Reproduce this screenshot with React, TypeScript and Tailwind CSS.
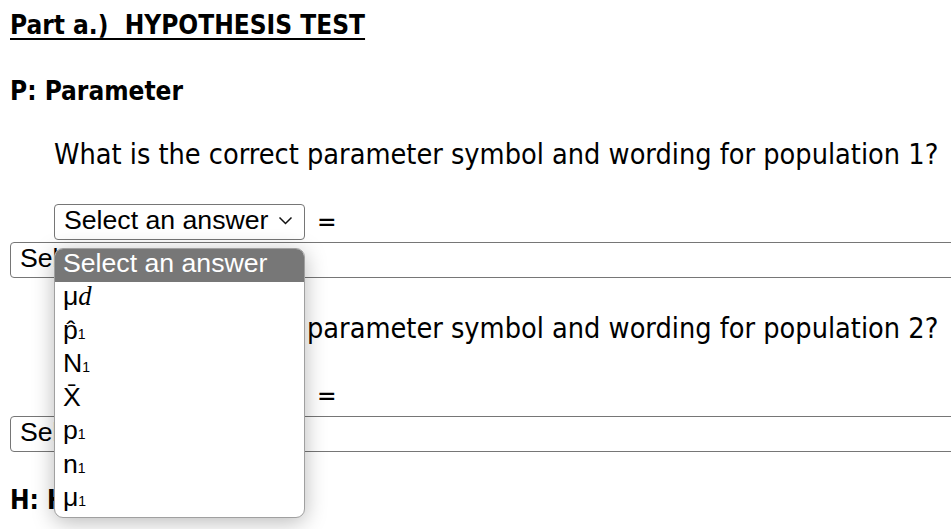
import React from "react"

const body = { fontFamily: '"DejaVu Sans Condensed", "DejaVu Sans", sans-serif' }
const arial = { fontFamily: '"Liberation Sans", Arial, sans-serif' }

function Chevron() {
  return (
    <svg width="15" height="9" viewBox="0 0 15 9" className="shrink-0">
      <polyline points="1.5,1.5 7.5,7.5 13.5,1.5" fill="none" stroke="#111" strokeWidth="1.5" />
    </svg>
  )
}

function FakeSelect({ wide = false }: { wide?: boolean }) {
  return (
    <div
      style={arial}
      className={
        "flex h-[36px] items-center rounded-[4px] border border-[#767676] bg-white pb-[3px] text-[26.67px] leading-none text-black " +
        (wide ? "w-[980px] pl-[9px]" : "w-[251px] justify-between pl-[9px] pr-[11px]")
      }
    >
      <span>Select an answer</span>
      {!wide && <Chevron />}
    </div>
  )
}

function QuestionBlock({ n }: { n: number }) {
  return (
    <>
      <p className="ml-[44px] text-[28.6px] leading-[34px]">
        What is the correct parameter symbol and wording for population {n}?
      </p>
      <div className="ml-[44px] mt-[33px] flex items-center gap-[12px]">
        <FakeSelect />
        <span className="text-[26px] leading-none">=</span>
      </div>
      <div className="mt-[2px]">
        <FakeSelect wide />
      </div>
    </>
  )
}

const sub = "text-[14px]"

const options = [
  <>μ<span style={{ fontFamily: '"Liberation Serif", serif' }} className="italic">d</span></>,
  <>p̂<span className={sub}>1</span></>,
  <>N<span className={sub}>1</span></>,
  <>X̄</>,
  <>p<span className={sub}>1</span></>,
  <>n<span className={sub}>1</span></>,
  <>μ<span className={sub}>1</span></>,
]

export default function App() {
  return (
    <div style={body} className="relative h-[529px] w-[951px] overflow-hidden bg-white text-black">
      <div className="pl-[10px]">
        <h2 className="mt-[10px] text-[26px] font-bold leading-[30px] underline decoration-2 underline-offset-[4px]">
          Part a.)&nbsp; HYPOTHESIS TEST
        </h2>
        <h3 className="mt-[36px] text-[26px] font-bold leading-[30px]">P: Parameter</h3>
        <div className="mt-[31px]">
          <QuestionBlock n={1} />
        </div>
        <div className="mt-[33px]">
          <QuestionBlock n={2} />
        </div>
        <h3 className="mt-[33px] text-[26px] font-bold leading-[30px]">H: Hypotheses</h3>
      </div>

      {/* open dropdown list */}
      <div
        style={arial}
        className="absolute left-[54px] top-[248px] w-[251px] overflow-hidden rounded-[9px] border border-[#a0a0a0] bg-white text-[26.67px] shadow-[0_4px_22px_rgba(0,0,0,0.28)]"
      >
        <div className="flex h-[33px] items-center bg-[#777777] pb-[5px] pl-[8px] leading-none text-white">
          Select an answer
        </div>
        {options.map((o, i) => (
          <div key={i} className="flex h-[33.5px] items-center pb-[4px] pl-[8px] leading-none">
            <span>{o}</span>
          </div>
        ))}
      </div>
    </div>
  )
}
